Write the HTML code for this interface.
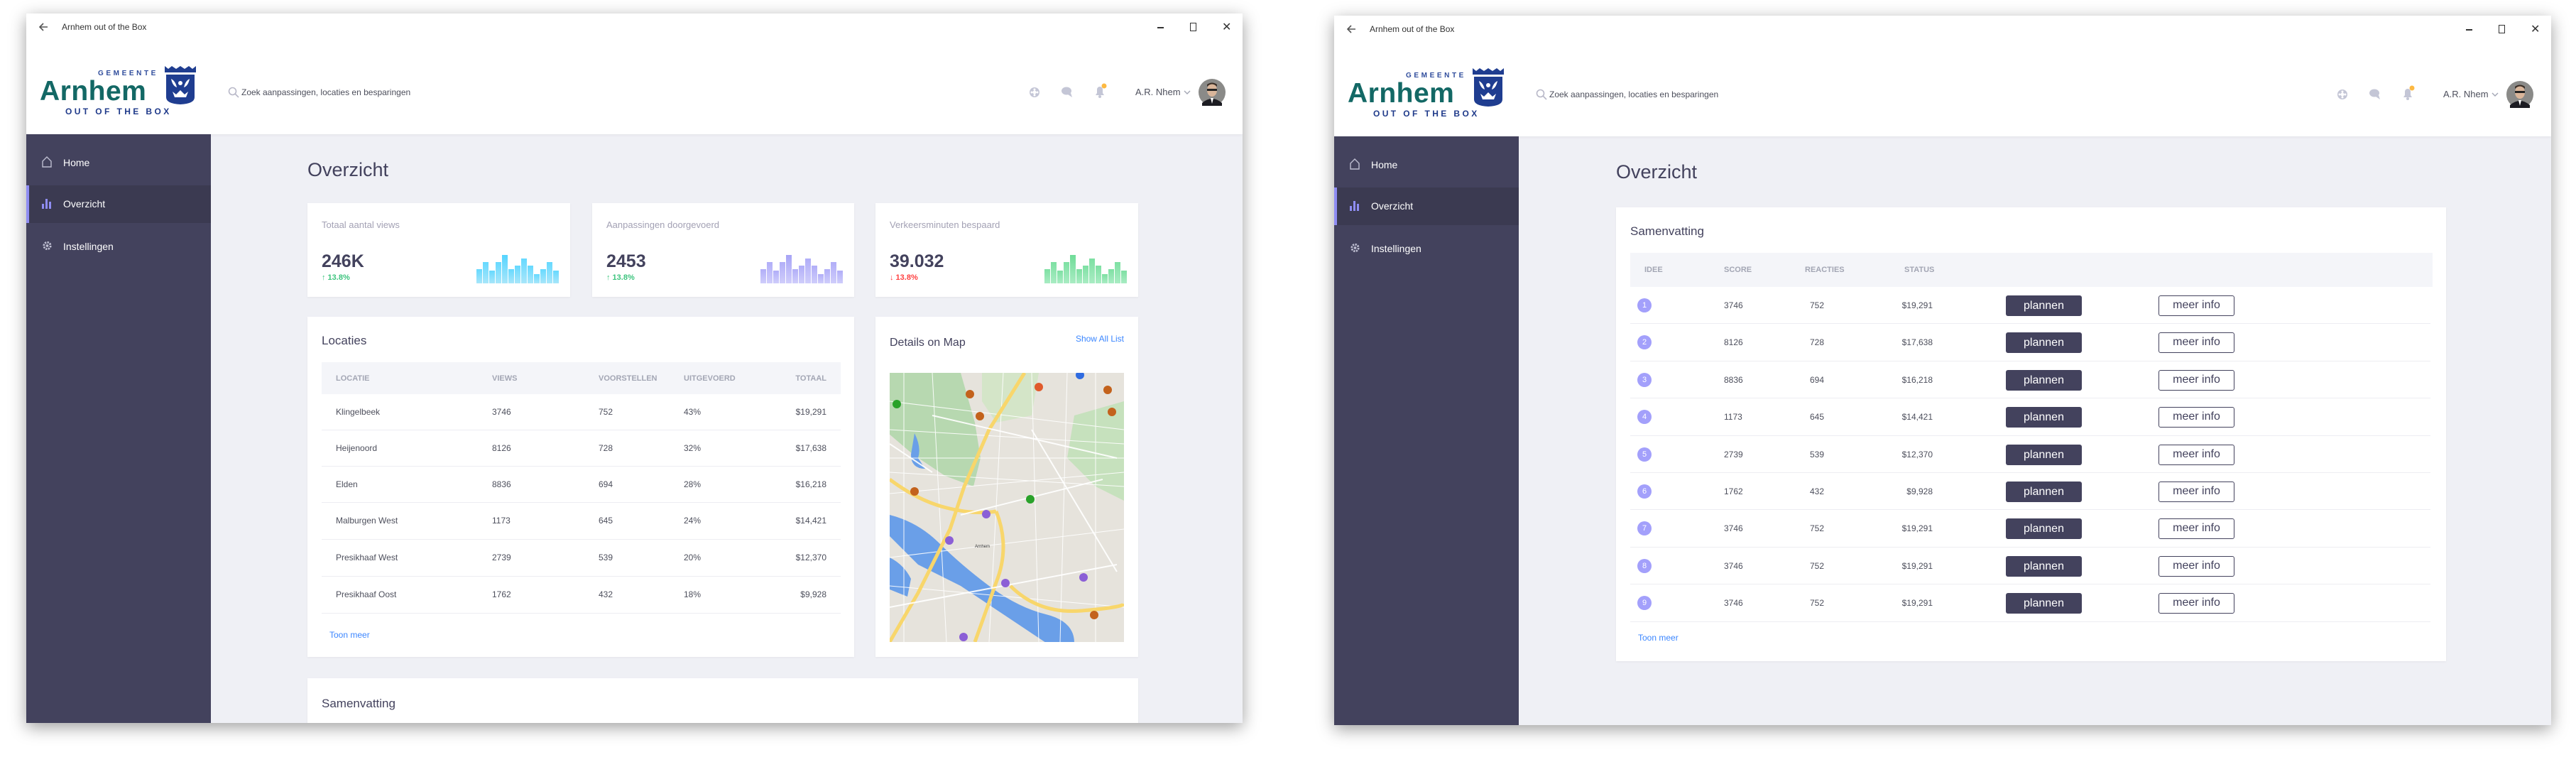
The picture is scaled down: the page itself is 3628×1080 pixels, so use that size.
<!DOCTYPE html>
<html><head><meta charset="utf-8">
<style>
*{margin:0;padding:0;box-sizing:border-box}
body{width:3628px;height:1080px;background:#fff;position:relative;overflow:hidden;font-family:"Liberation Sans",sans-serif;color:#3d3c4f}
.win{position:absolute;width:1714px;height:999px;background:#eff0f5;box-shadow:0 6px 22px rgba(0,0,0,.38);overflow:hidden}
.a{position:absolute;white-space:nowrap}
.top{position:absolute;left:0;top:0;width:100%;height:170px;background:#fff;box-shadow:0 1px 4px rgba(0,0,0,.06)}
.side{position:absolute;left:0;top:170px;width:260px;bottom:0;background:#43425d}
.side .it{position:absolute;left:0;width:260px;height:53px;color:#fff;font-size:14px}
.side .it span{position:absolute;left:52px;top:18px}
.side .it svg{position:absolute;left:22px;top:17px}
.active{background:#3b3a51;border-left:4px solid #8f8df3}
.card{position:absolute;background:#fff;box-shadow:0 1px 3px rgba(0,0,0,.05)}
.th{position:absolute;background:#f4f5f9;font-size:11px;color:#a3a6b4;font-weight:bold}
.row{position:absolute;border-bottom:1.5px solid #ededf2;font-size:12px;color:#4d4f5c}
.bars{position:absolute;display:flex;align-items:flex-end;gap:1px}
.bars i{display:block;width:8px}
.btnp{position:absolute;width:107px;height:29px;background:#43425d;color:#fff;border-radius:3px;font-size:16px;text-align:center;line-height:29px}
.btnm{position:absolute;width:107px;height:29px;background:#fff;color:#43425d;border:1.5px solid #43425d;border-radius:3px;font-size:16px;text-align:center;line-height:26px}
.badge{position:absolute;width:20px;height:20px;border-radius:50%;background:#a3a0fb;color:#fff;font-size:11px;text-align:center;line-height:20px}
</style></head><body>

<!-- WINDOW 1 -->
<div class="win" style="left:37px;top:19px;width:1713px">
  <div class="top">
    <svg class="a" style="left:17px;top:12px" width="14" height="14" viewBox="0 0 14 14"><path d="M13 7H2M7 2L2 7l5 5" stroke="#555" stroke-width="1.6" fill="none"/></svg>
    <div class="a" style="left:50px;top:12px;font-size:12px;color:#333">Arnhem out of the Box</div>
    <div class="a" style="left:1593px;top:19px;width:9px;height:1.5px;background:#333"></div>
    <div class="a" style="left:1639px;top:13px;width:9px;height:12px;border:1.5px solid #333"></div>
    <div class="a" style="left:1684px;top:9px;font-size:16px;color:#333">✕</div>
    <div class="a" style="left:101px;top:79px;font-size:10px;color:#2f4c9c;letter-spacing:3.6px;font-weight:bold">GEMEENTE</div>
    <div class="a" style="left:19px;top:88px;font-size:39px;color:#136865;font-weight:bold;letter-spacing:0.5px">Arnhem</div>
    <div class="a" style="left:55px;top:131px;font-size:12px;color:#1f3a8a;font-weight:bold;letter-spacing:3.4px">OUT OF THE BOX</div>
    <svg class="a" style="left:194px;top:72px" width="46" height="57" viewBox="0 0 46 57"><path d="M1 2l5 4 5-4 6 4 6-4 6 4 6-4 5 4 5-4v9H1z" fill="#1f3d90"/><path d="M3 14h40v32q0 9-20 10Q3 55 3 46z" fill="#1f3d90"/><path d="M10 20q6 3 8 12q-6-2-8-12zM36 20q-6 3-8 12q6-2 8-12zM12 38l5 4 6-6 6 6 5-4-3 8h-16z" fill="#fff"/><circle cx="23" cy="26" r="3" fill="#fff"/></svg>
    <svg class="a" style="left:284px;top:103px" width="16" height="16" viewBox="0 0 16 16"><circle cx="6.5" cy="6.5" r="5" stroke="#b8b8c8" stroke-width="1.6" fill="none"/><path d="M10 10l5 5" stroke="#b8b8c8" stroke-width="1.6"/></svg>
    <div class="a" style="left:303px;top:104px;font-size:12px;color:#4d4f5c">Zoek aanpassingen, locaties en besparingen</div>
    <svg class="a" style="left:1412px;top:103px" width="16" height="16" viewBox="0 0 16 16"><circle cx="8" cy="8" r="7" fill="#c4c6d6"/><circle cx="8" cy="8" r="2.5" fill="#fff"/><circle cx="4" cy="8" r="1.5" fill="#fff"/><circle cx="12" cy="8" r="1.5" fill="#fff"/><circle cx="8" cy="4" r="1.5" fill="#fff"/><circle cx="8" cy="12" r="1.5" fill="#fff"/></svg>
    <svg class="a" style="left:1457px;top:102px" width="18" height="18" viewBox="0 0 18 18"><ellipse cx="8" cy="7" rx="7" ry="5.5" fill="#c4c6d6"/><path d="M10 12l6 4-2-6z" fill="#c4c6d6"/></svg>
    <svg class="a" style="left:1502px;top:98px" width="22" height="22" viewBox="0 0 22 22"><path d="M4 17h12l-2-3V9a4 4 0 0 0-8 0v5z" fill="#c4c6d6"/><circle cx="10" cy="19" r="2" fill="#c4c6d6"/><circle cx="16" cy="4" r="3.5" fill="#fdb942"/></svg>
    <div class="a" style="left:1562px;top:103px;font-size:13px;color:#4d4f5c">A.R. Nhem</div>
    <svg class="a" style="left:1630px;top:107px" width="10" height="8" viewBox="0 0 10 8"><path d="M1 2l4 4 4-4" stroke="#a3a6b4" stroke-width="1.4" fill="none"/></svg>
    <svg class="a" style="left:1651px;top:92px" width="38" height="38" viewBox="0 0 38 38"><circle cx="19" cy="19" r="19" fill="#8a8a88"/><ellipse cx="19" cy="16" rx="7" ry="9" fill="#d9b59a"/><path d="M12 11q7-7 14 0v-3q-7-5-14 0z" fill="#3a2e26"/><rect x="12" y="14" width="14" height="3" fill="#222"/><path d="M5 34q14-12 28 0v4H5z" fill="#1c1c22"/><path d="M17 27l2 8 2-8z" fill="#fff"/></svg>
  </div>
  <div class="side">
    <div class="it" style="top:14px"><svg width="14" height="16" viewBox="0 0 14 16"><path d="M1 7L7 1l6 6v8H1z" stroke="#bdbdd0" stroke-width="1.4" fill="none"/></svg><span>Home</span></div>
    <div class="it active" style="top:72px"><svg width="14" height="16" viewBox="0 0 14 16" style="left:18px"><rect x="0" y="9" width="3" height="7" fill="#8f8df3"/><rect x="5" y="2" width="3" height="14" fill="#8f8df3"/><rect x="10" y="6" width="3" height="10" fill="#8f8df3"/></svg><span style="left:48px">Overzicht</span></div>
    <div class="it" style="top:132px"><svg width="15" height="16" viewBox="0 0 16 16"><circle cx="8" cy="8" r="5" stroke="#bdbdd0" stroke-width="3" fill="none" stroke-dasharray="2.5 1.4"/><circle cx="8" cy="8" r="2" fill="#bdbdd0"/></svg><span>Instellingen</span></div>
  </div>
  <div class="a" style="left:396px;top:205px;font-size:27px;color:#43425d">Overzicht</div>

  <div class="card" style="left:396px;top:267px;width:370px;height:132px">
    <div class="a" style="left:20px;top:23px;font-size:13px;color:#a3a1b4">Totaal aantal views</div>
    <div class="a" style="left:20px;top:68px;font-size:25px;font-weight:bold;color:#43425d">246K</div>
    <div class="a" style="left:20px;top:99px;font-size:11px;font-weight:bold;color:#3dc47e">↑ 13.8%</div>
    <div class="bars" style="left:238px;bottom:19px"><i style="height:20px;background:linear-gradient(#66d9ff,#a8e6fa)"></i><i style="height:30px;background:linear-gradient(#66d9ff,#a8e6fa)"></i><i style="height:18px;background:linear-gradient(#66d9ff,#a8e6fa)"></i><i style="height:30px;background:linear-gradient(#66d9ff,#a8e6fa)"></i><i style="height:40px;background:linear-gradient(#55d4ff,#a8e6fa)"></i><i style="height:20px;background:linear-gradient(#66d9ff,#a8e6fa)"></i><i style="height:25px;background:linear-gradient(#66d9ff,#a8e6fa)"></i><i style="height:35px;background:linear-gradient(#66d9ff,#a8e6fa)"></i><i style="height:25px;background:linear-gradient(#66d9ff,#a8e6fa)"></i><i style="height:13px;background:linear-gradient(#66d9ff,#a8e6fa)"></i><i style="height:20px;background:linear-gradient(#66d9ff,#a8e6fa)"></i><i style="height:30px;background:linear-gradient(#66d9ff,#a8e6fa)"></i><i style="height:18px;background:linear-gradient(#66d9ff,#a8e6fa)"></i></div>
  </div>
  <div class="card" style="left:797px;top:267px;width:369px;height:132px">
    <div class="a" style="left:20px;top:23px;font-size:13px;color:#a3a1b4">Aanpassingen doorgevoerd</div>
    <div class="a" style="left:20px;top:68px;font-size:25px;font-weight:bold;color:#43425d">2453</div>
    <div class="a" style="left:20px;top:99px;font-size:11px;font-weight:bold;color:#3dc47e">↑ 13.8%</div>
    <div class="bars" style="left:237px;bottom:19px"><i style="height:20px;background:linear-gradient(#b1aef8,#cfcdfb)"></i><i style="height:30px;background:linear-gradient(#b1aef8,#cfcdfb)"></i><i style="height:18px;background:linear-gradient(#b1aef8,#cfcdfb)"></i><i style="height:30px;background:linear-gradient(#b1aef8,#cfcdfb)"></i><i style="height:40px;background:linear-gradient(#a7a4f6,#cfcdfb)"></i><i style="height:20px;background:linear-gradient(#b1aef8,#cfcdfb)"></i><i style="height:25px;background:linear-gradient(#b1aef8,#cfcdfb)"></i><i style="height:35px;background:linear-gradient(#b1aef8,#cfcdfb)"></i><i style="height:25px;background:linear-gradient(#b1aef8,#cfcdfb)"></i><i style="height:13px;background:linear-gradient(#b1aef8,#cfcdfb)"></i><i style="height:20px;background:linear-gradient(#b1aef8,#cfcdfb)"></i><i style="height:30px;background:linear-gradient(#b1aef8,#cfcdfb)"></i><i style="height:18px;background:linear-gradient(#b1aef8,#cfcdfb)"></i></div>
  </div>
  <div class="card" style="left:1196px;top:267px;width:370px;height:132px">
    <div class="a" style="left:20px;top:23px;font-size:13px;color:#a3a1b4">Verkeersminuten bespaard</div>
    <div class="a" style="left:20px;top:68px;font-size:25px;font-weight:bold;color:#43425d">39.032</div>
    <div class="a" style="left:20px;top:99px;font-size:11px;font-weight:bold;color:#ff4141">↓ 13.8%</div>
    <div class="bars" style="left:238px;bottom:19px"><i style="height:20px;background:linear-gradient(#7ee0a3,#a9ecc3)"></i><i style="height:30px;background:linear-gradient(#7ee0a3,#a9ecc3)"></i><i style="height:18px;background:linear-gradient(#7ee0a3,#a9ecc3)"></i><i style="height:30px;background:linear-gradient(#7ee0a3,#a9ecc3)"></i><i style="height:40px;background:linear-gradient(#6fdc98,#a9ecc3)"></i><i style="height:20px;background:linear-gradient(#7ee0a3,#a9ecc3)"></i><i style="height:25px;background:linear-gradient(#7ee0a3,#a9ecc3)"></i><i style="height:35px;background:linear-gradient(#7ee0a3,#a9ecc3)"></i><i style="height:25px;background:linear-gradient(#7ee0a3,#a9ecc3)"></i><i style="height:13px;background:linear-gradient(#7ee0a3,#a9ecc3)"></i><i style="height:20px;background:linear-gradient(#7ee0a3,#a9ecc3)"></i><i style="height:30px;background:linear-gradient(#7ee0a3,#a9ecc3)"></i><i style="height:18px;background:linear-gradient(#7ee0a3,#a9ecc3)"></i></div>
  </div>

  <div class="card" style="left:396px;top:427px;width:770px;height:479px">
    <div class="a" style="left:20px;top:24px;font-size:17px;color:#43425d">Locaties</div>
    <div class="th" style="left:20px;top:64px;width:731px;height:45px">
      <span class="a" style="left:20px;top:17px">LOCATIE</span><span class="a" style="left:240px;top:17px">VIEWS</span><span class="a" style="left:390px;top:17px">VOORSTELLEN</span><span class="a" style="left:510px;top:17px">UITGEVOERD</span><span class="a" style="right:20px;top:17px">TOTAAL</span>
    </div>
    <div class="row" style="left:20px;top:109px;width:731px;height:51px"><span class="a" style="left:20px;top:18px">Klingelbeek</span><span class="a" style="left:240px;top:18px">3746</span><span class="a" style="left:390px;top:18px">752</span><span class="a" style="left:510px;top:18px">43%</span><span class="a" style="right:20px;top:18px">$19,291</span></div>
    <div class="row" style="left:20px;top:160px;width:731px;height:51px"><span class="a" style="left:20px;top:18px">Heijenoord</span><span class="a" style="left:240px;top:18px">8126</span><span class="a" style="left:390px;top:18px">728</span><span class="a" style="left:510px;top:18px">32%</span><span class="a" style="right:20px;top:18px">$17,638</span></div>
    <div class="row" style="left:20px;top:211px;width:731px;height:51px"><span class="a" style="left:20px;top:18px">Elden</span><span class="a" style="left:240px;top:18px">8836</span><span class="a" style="left:390px;top:18px">694</span><span class="a" style="left:510px;top:18px">28%</span><span class="a" style="right:20px;top:18px">$16,218</span></div>
    <div class="row" style="left:20px;top:262px;width:731px;height:52px"><span class="a" style="left:20px;top:18px">Malburgen West</span><span class="a" style="left:240px;top:18px">1173</span><span class="a" style="left:390px;top:18px">645</span><span class="a" style="left:510px;top:18px">24%</span><span class="a" style="right:20px;top:18px">$14,421</span></div>
    <div class="row" style="left:20px;top:314px;width:731px;height:52px"><span class="a" style="left:20px;top:18px">Presikhaaf West</span><span class="a" style="left:240px;top:18px">2739</span><span class="a" style="left:390px;top:18px">539</span><span class="a" style="left:510px;top:18px">20%</span><span class="a" style="right:20px;top:18px">$12,370</span></div>
    <div class="row" style="left:20px;top:366px;width:731px;height:52px"><span class="a" style="left:20px;top:18px">Presikhaaf Oost</span><span class="a" style="left:240px;top:18px">1762</span><span class="a" style="left:390px;top:18px">432</span><span class="a" style="left:510px;top:18px">18%</span><span class="a" style="right:20px;top:18px">$9,928</span></div>
    <div class="a" style="left:31px;top:441px;font-size:12px;color:#3b86ff">Toon meer</div>
  </div>

  <div class="card" style="left:1196px;top:427px;width:370px;height:479px">
    <div class="a" style="left:20px;top:28px;font-size:16px;color:#43425d">Details on Map</div>
    <div class="a" style="right:20px;top:24px;font-size:12px;color:#3b86ff">Show All List</div>
    <svg class="a" style="left:20px;top:79px" width="330" height="379" viewBox="0 0 330 379">
      <rect width="330" height="379" fill="#e6e3dc"/>
      <path d="M0 0h100l20 70 8 50-10 40-40-15-45-30-35-30z" fill="#b7d8b0"/>
      <path d="M130 0h80l-10 60-50 10-20-30z" fill="#d4e5c8"/>
      <path d="M260 60l70-20v140l-40-20-40-40z" fill="#c6e1bd"/>
      <path d="M35 85q10 20 5 35l10 15q-20 0-20-20z" fill="#6a9fe8"/>
      <path d="M0 200q40 10 70 40t70 60 80 40 40 40h-40l-60-40-60-40-60-30L0 230z" fill="#6a9fe8"/>
      <path d="M0 260q20 10 30 30l-5 25-25-10z" fill="#6a9fe8"/>
      <g stroke="#fff" stroke-width="1" fill="none" opacity=".9">
        <path d="M0 120h330M0 140l330 20M0 170l330-30M20 0v379M60 0l20 379M160 0l-20 379M200 0l10 379M250 0l-10 379M290 0v379M0 260l330-40M0 300l330 30M0 80l330 20M0 40l330 40"/>
      </g>
      <path d="M190 0L140 80 105 160 85 220 40 310 0 379" stroke="#f8d66b" stroke-width="5" fill="none"/>
      <path d="M0 150q40 30 80 40t70 5" stroke="#f8d66b" stroke-width="5" fill="none"/>
      <path d="M150 195q20 50 0 100l-30 84" stroke="#f8d66b" stroke-width="5" fill="none"/>
      <path d="M170 300q40 40 100 35t60-10" stroke="#f8d66b" stroke-width="5" fill="none"/>
      <path d="M0 100l60 40M100 200l200-50M60 60l260 60M0 330l320-60M200 80l120 200" stroke="#fff" stroke-width="2" fill="none" opacity=".9"/>
      <circle cx="113" cy="30" r="6" fill="#c3621c"/><circle cx="210" cy="20" r="6" fill="#e05a2b"/><circle cx="307" cy="24" r="6" fill="#c3621c"/><circle cx="127" cy="61" r="6" fill="#c3621c"/><circle cx="313" cy="55" r="6" fill="#c3621c"/><circle cx="10" cy="44" r="6" fill="#2aa22a"/><circle cx="198" cy="178" r="6" fill="#2aa22a"/><circle cx="136" cy="199" r="6" fill="#8b5fd6"/><circle cx="84" cy="236" r="6" fill="#8b5fd6"/><circle cx="163" cy="296" r="6" fill="#8b5fd6"/><circle cx="273" cy="288" r="6" fill="#8b5fd6"/><circle cx="104" cy="372" r="6" fill="#8b5fd6"/><circle cx="288" cy="341" r="6" fill="#c3621c"/><circle cx="35" cy="167" r="6" fill="#c3621c"/><circle cx="268" cy="3" r="6" fill="#2f6be0"/>
      <text x="120" y="246" font-size="6" fill="#333" font-family="Liberation Sans">Arnhem</text>
    </svg>
  </div>

  <div class="card" style="left:396px;top:936px;width:1170px;height:80px">
    <div class="a" style="left:20px;top:26px;font-size:17px;color:#43425d">Samenvatting</div>
  </div>
</div>

<!-- WINDOW 2 -->
<div class="win" style="left:1879px;top:22px">
  <div class="top">
    <svg class="a" style="left:17px;top:12px" width="14" height="14" viewBox="0 0 14 14"><path d="M13 7H2M7 2L2 7l5 5" stroke="#555" stroke-width="1.6" fill="none"/></svg>
    <div class="a" style="left:50px;top:12px;font-size:12px;color:#333">Arnhem out of the Box</div>
    <div class="a" style="left:1594px;top:19px;width:9px;height:1.5px;background:#333"></div>
    <div class="a" style="left:1640px;top:13px;width:9px;height:12px;border:1.5px solid #333"></div>
    <div class="a" style="left:1685px;top:9px;font-size:16px;color:#333">✕</div>
    <div class="a" style="left:101px;top:79px;font-size:10px;color:#2f4c9c;letter-spacing:3.6px;font-weight:bold">GEMEENTE</div>
    <div class="a" style="left:19px;top:88px;font-size:39px;color:#136865;font-weight:bold;letter-spacing:0.5px">Arnhem</div>
    <div class="a" style="left:55px;top:131px;font-size:12px;color:#1f3a8a;font-weight:bold;letter-spacing:3.4px">OUT OF THE BOX</div>
    <svg class="a" style="left:194px;top:72px" width="46" height="57" viewBox="0 0 46 57"><path d="M1 2l5 4 5-4 6 4 6-4 6 4 6-4 5 4 5-4v9H1z" fill="#1f3d90"/><path d="M3 14h40v32q0 9-20 10Q3 55 3 46z" fill="#1f3d90"/><path d="M10 20q6 3 8 12q-6-2-8-12zM36 20q-6 3-8 12q6-2 8-12zM12 38l5 4 6-6 6 6 5-4-3 8h-16z" fill="#fff"/><circle cx="23" cy="26" r="3" fill="#fff"/></svg>
    <svg class="a" style="left:284px;top:103px" width="16" height="16" viewBox="0 0 16 16"><circle cx="6.5" cy="6.5" r="5" stroke="#b8b8c8" stroke-width="1.6" fill="none"/><path d="M10 10l5 5" stroke="#b8b8c8" stroke-width="1.6"/></svg>
    <div class="a" style="left:303px;top:104px;font-size:12px;color:#4d4f5c">Zoek aanpassingen, locaties en besparingen</div>
    <svg class="a" style="left:1412px;top:103px" width="16" height="16" viewBox="0 0 16 16"><circle cx="8" cy="8" r="7" fill="#c4c6d6"/><circle cx="8" cy="8" r="2.5" fill="#fff"/><circle cx="4" cy="8" r="1.5" fill="#fff"/><circle cx="12" cy="8" r="1.5" fill="#fff"/><circle cx="8" cy="4" r="1.5" fill="#fff"/><circle cx="8" cy="12" r="1.5" fill="#fff"/></svg>
    <svg class="a" style="left:1457px;top:102px" width="18" height="18" viewBox="0 0 18 18"><ellipse cx="8" cy="7" rx="7" ry="5.5" fill="#c4c6d6"/><path d="M10 12l6 4-2-6z" fill="#c4c6d6"/></svg>
    <svg class="a" style="left:1502px;top:98px" width="22" height="22" viewBox="0 0 22 22"><path d="M4 17h12l-2-3V9a4 4 0 0 0-8 0v5z" fill="#c4c6d6"/><circle cx="10" cy="19" r="2" fill="#c4c6d6"/><circle cx="16" cy="4" r="3.5" fill="#fdb942"/></svg>
    <div class="a" style="left:1562px;top:103px;font-size:13px;color:#4d4f5c">A.R. Nhem</div>
    <svg class="a" style="left:1630px;top:107px" width="10" height="8" viewBox="0 0 10 8"><path d="M1 2l4 4 4-4" stroke="#a3a6b4" stroke-width="1.4" fill="none"/></svg>
    <svg class="a" style="left:1651px;top:92px" width="38" height="38" viewBox="0 0 38 38"><circle cx="19" cy="19" r="19" fill="#8a8a88"/><ellipse cx="19" cy="16" rx="7" ry="9" fill="#d9b59a"/><path d="M12 11q7-7 14 0v-3q-7-5-14 0z" fill="#3a2e26"/><rect x="12" y="14" width="14" height="3" fill="#222"/><path d="M5 34q14-12 28 0v4H5z" fill="#1c1c22"/><path d="M17 27l2 8 2-8z" fill="#fff"/></svg>
  </div>
  <div class="side">
    <div class="it" style="top:14px"><svg width="14" height="16" viewBox="0 0 14 16"><path d="M1 7L7 1l6 6v8H1z" stroke="#bdbdd0" stroke-width="1.4" fill="none"/></svg><span>Home</span></div>
    <div class="it active" style="top:72px"><svg width="14" height="16" viewBox="0 0 14 16" style="left:18px"><rect x="0" y="9" width="3" height="7" fill="#8f8df3"/><rect x="5" y="2" width="3" height="14" fill="#8f8df3"/><rect x="10" y="6" width="3" height="10" fill="#8f8df3"/></svg><span style="left:48px">Overzicht</span></div>
    <div class="it" style="top:132px"><svg width="15" height="16" viewBox="0 0 16 16"><circle cx="8" cy="8" r="5" stroke="#bdbdd0" stroke-width="3" fill="none" stroke-dasharray="2.5 1.4"/><circle cx="8" cy="8" r="2" fill="#bdbdd0"/></svg><span>Instellingen</span></div>
  </div>
  <div class="a" style="left:397px;top:205px;font-size:27px;color:#43425d">Overzicht</div>

  <div class="card" style="left:397px;top:270px;width:1169px;height:639px">
    <div class="a" style="left:20px;top:24px;font-size:17px;color:#43425d">Samenvatting</div>
    <div class="th" style="left:20px;top:64px;width:1130px;height:48px">
      <span class="a" style="left:20px;top:18px">IDEE</span><span class="a" style="left:132px;top:18px">SCORE</span><span class="a" style="left:246px;top:18px">REACTIES</span><span class="a" style="left:386px;top:18px">STATUS</span>
    </div>
  </div>
</div>

<div id="rows2"></div>
<script>
(function(){
 var d=[["3746","752","$19,291"],["8126","728","$17,638"],["8836","694","$16,218"],["1173","645","$14,421"],["2739","539","$12,370"],["1762","432","$9,928"],["3746","752","$19,291"],["3746","752","$19,291"],["3746","752","$19,291"]];
 var h="";
 for(var i=0;i<9;i++){
  var t=404+i*52.4;
  h+='<div class="row" style="left:2296px;top:'+t+'px;width:1127px;height:52.4px">'+
   '<div class="badge" style="left:10px;top:16px">'+(i+1)+'</div>'+
   '<span class="a" style="left:132px;top:19px">'+d[i][0]+'</span>'+
   '<span class="a" style="left:253px;top:19px">'+d[i][1]+'</span>'+
   '<span class="a" style="right:701px;top:19px">'+d[i][2]+'</span>'+
   '<div class="btnp" style="left:529px;top:12px">plannen</div>'+
   '<div class="btnm" style="left:744px;top:12px">meer info</div></div>';
 }
 h+='<div class="a" style="left:2307px;top:891px;font-size:12px;color:#3b86ff">Toon meer</div>';
 document.getElementById("rows2").innerHTML=h;
})();
</script>
</body></html>
